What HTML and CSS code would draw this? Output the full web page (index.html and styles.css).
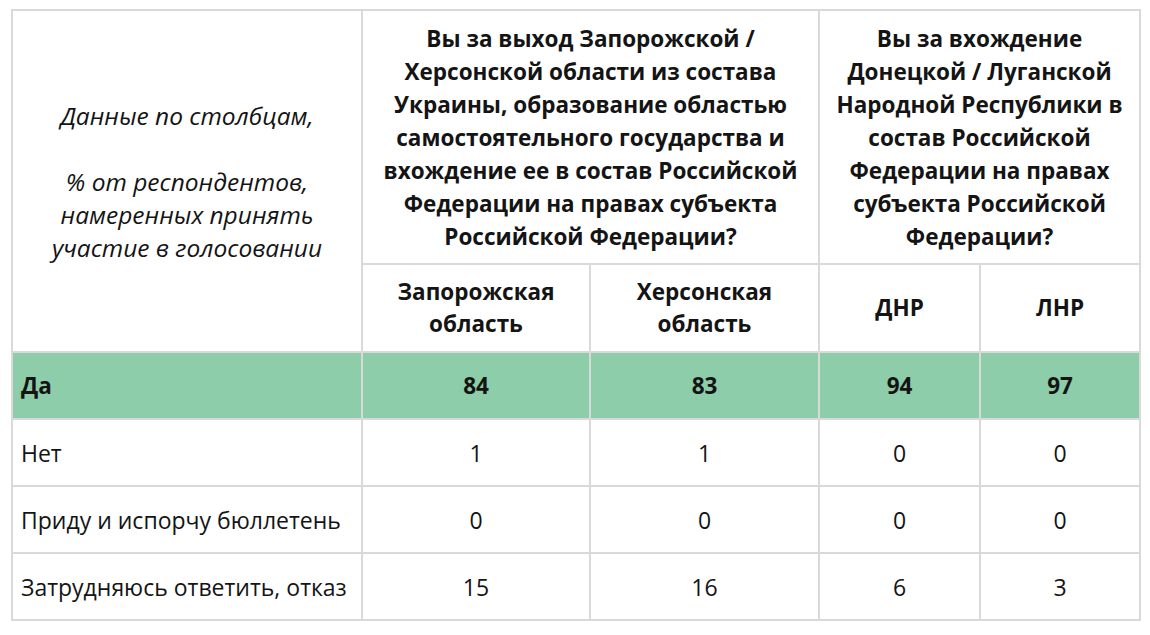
FILE: index.html
```html
<!DOCTYPE html>
<html lang="ru">
<head>
<meta charset="utf-8">
<title>Опрос</title>
<link rel="stylesheet" href="styles.css">
</head>
<body>
<table class="poll">
  <colgroup>
    <col class="c-label">
    <col class="c-zap">
    <col class="c-her">
    <col class="c-dnr">
    <col class="c-lnr">
  </colgroup>
  <thead>
    <tr class="r-q">
      <th rowspan="2" class="note">Данные по столбцам,<br><br>% от респондентов,<br>намеренных принять<br>участие в голосовании</th>
      <th colspan="2" class="q">Вы за выход Запорожской /<br>Херсонской области из состава<br>Украины, образование областью<br>самостоятельного государства и<br>вхождение ее в состав Российской<br>Федерации на правах субъекта<br>Российской Федерации?</th>
      <th colspan="2" class="q">Вы за вхождение<br>Донецкой / Луганской<br>Народной Республики в<br>состав Российской<br>Федерации на правах<br>субъекта Российской<br>Федерации?</th>
    </tr>
    <tr class="r-sub">
      <th class="sub">Запорожская<br>область</th>
      <th class="sub">Херсонская<br>область</th>
      <th class="sub">ДНР</th>
      <th class="sub">ЛНР</th>
    </tr>
  </thead>
  <tbody>
    <tr class="row yes">
      <td class="lab">Да</td><td>84</td><td>83</td><td>94</td><td>97</td>
    </tr>
    <tr class="row">
      <td class="lab">Нет</td><td>1</td><td>1</td><td>0</td><td>0</td>
    </tr>
    <tr class="row">
      <td class="lab">Приду и испорчу бюллетень</td><td>0</td><td>0</td><td>0</td><td>0</td>
    </tr>
    <tr class="row">
      <td class="lab">Затрудняюсь ответить, отказ</td><td>15</td><td>16</td><td>6</td><td>3</td>
    </tr>
  </tbody>
</table>
</body>
</html>
```

FILE: styles.css
```css
html, body {
  margin: 0;
  padding: 0;
  background: #ffffff;
}
body {
  padding: 9px 0 0 11px;
  font-family: "Open Sans", "Noto Sans", sans-serif;
  color: #141414;
}
.poll {
  border-collapse: collapse;
  table-layout: fixed;
  width: 1128px;
  font-size: 23px;
}
.c-label { width: 350px; }
.c-zap { width: 228px; }
.c-her { width: 229px; }
.c-dnr { width: 161px; }
.c-lnr { width: 160px; }
.poll th, .poll td {
  border: 2px solid #d9d9d9;
  padding: 0 4px;
  text-align: center;
  vertical-align: middle;
  white-space: nowrap;
}
.r-q { height: 254px; }
.r-sub { height: 88px; }
.row { height: 67px; }
.note {
  font-weight: 400;
  font-style: italic;
  font-size: 24.5px;
  line-height: 33px;
}
.q {
  font-weight: 700;
  font-size: 22.5px;
  line-height: 33px;
}
.sub {
  font-weight: 700;
  font-size: 22.5px;
  line-height: 32px;
}
.lab {
  text-align: left !important;
  padding-left: 8px !important;
}
.yes td {
  background: #8dcda9;
  font-weight: 700;
  font-size: 22.5px;
}
```
